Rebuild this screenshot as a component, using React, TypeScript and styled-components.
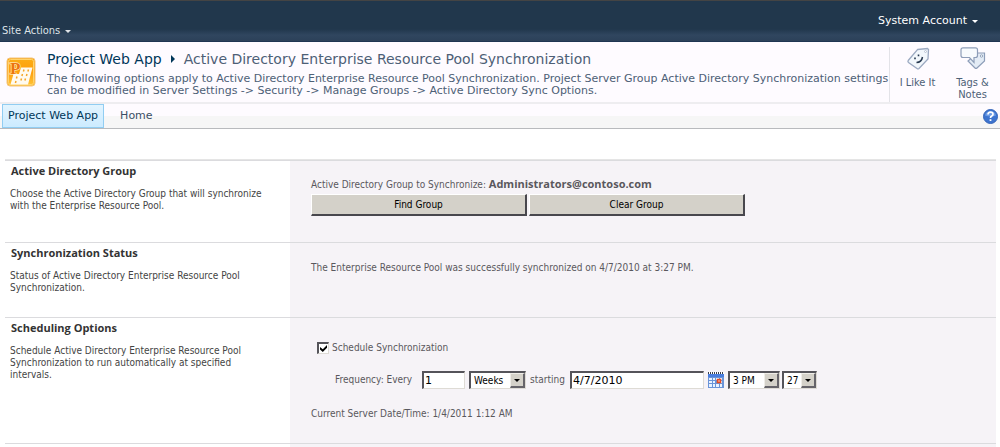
import React from 'react';
import styled, { createGlobalStyle } from 'styled-components';

const wide = `'DejaVu Sans', Verdana, sans-serif`;
const narrow = `'DejaVu Sans Condensed', 'DejaVu Sans', Tahoma, sans-serif`;
const strong = `'Open Sans', Tahoma, sans-serif`;

const GlobalStyle = createGlobalStyle`
  * { box-sizing: border-box; }
  body { margin: 0; background: #fff; font-family: ${narrow}; font-size: 11px; line-height: 12px; color: #444; overflow: hidden; }
  button, input, select { font: inherit; margin: 0; }
  h1, h2, p { margin: 0; font: inherit; }
  b { font-family: ${strong}; font-size: 11px; line-height: 10px; }
`;

const Ribbon = styled.header`
  display: flex;
  justify-content: space-between;
  height: 42px;
  padding: 0 22px 0 2px;
  border-top: 1px solid #444;
  border-bottom: 1px solid #1f3552;
  background: linear-gradient(#21374c 0 70%, #30465f 85%, #2c4159);
`;

const MenuButton = styled.button<{ $wide?: boolean }>`
  display: flex;
  align-items: center;
  gap: 5px;
  align-self: ${(p) => (p.$wide ? 'flex-start' : 'flex-end')};
  margin: ${(p) => (p.$wide ? '12px 0 0' : '0 0 2px')};
  padding: 0;
  border: 0;
  background: none;
  color: ${(p) => (p.$wide ? '#fff' : '#dfe3e8')};
  font-family: ${(p) => (p.$wide ? wide : narrow)};
  line-height: 16px;
`;

const Caret = styled.span`
  border: solid transparent;
  border-width: 3px 3px 0;
  border-top-color: currentColor;
`;

const TitleArea = styled.div`
  display: flex;
  min-height: 62px;
  border-bottom: 2px solid #eeedf0;
  background: #fefbff;
`;

const Logo = styled.svg`
  flex: none;
  width: 30px;
  height: 30px;
  margin: 15px 11px 0 6px;
`;

const TitleText = styled.div`
  flex: 1;
  min-width: 0;
  padding-top: 7px;
  font-family: ${wide};
  color: #4d6076;
`;

const Title = styled.h1`
  display: flex;
  align-items: center;
  gap: 9px;
  font-size: 14px;
  line-height: 20px;
  white-space: nowrap;

  a { color: #003759; text-decoration: none; }
`;

const Crumb = styled.span`
  border: solid transparent;
  border-width: 4px 0 4px 4px;
  border-left-color: #003759;
`;

const Description = styled.p`
  margin-top: 4px;
`;

const Social = styled.div`
  display: flex;
  flex: none;
  width: 111px;
  margin-top: 5px;
  border-left: 1px solid #e3e3e8;
`;

const SocialButton = styled.button`
  display: flex;
  flex: 1;
  flex-direction: column;
  align-items: center;
  gap: 6px;
  padding: 0;
  border: 0;
  background: none;
  color: #4d6076;

  svg { width: 26px; height: 24px; }
`;

const Nav = styled.nav`
  display: flex;
  align-items: center;
  height: 25px;
  padding: 0 2px;
  border-bottom: 1px solid #b8babd;
  background: linear-gradient(#fefbff 0 50%, #f6f6f6 50%);
  font-family: ${wide};
`;

const NavLink = styled.a<{ $active?: boolean }>`
  display: flex;
  align-items: center;
  height: 24px;
  margin-right: 10px;
  padding: 0 5px;
  border: 1px solid ${(p) => (p.$active ? '#91cdf2' : 'transparent')};
  background: ${(p) => (p.$active ? 'linear-gradient(#e2f4ff, #ccebff)' : 'none')};
  color: ${(p) => (p.$active ? '#003759' : '#3b4f65')};
  text-decoration: none;
  white-space: nowrap;
`;

const HelpLink = styled.a`
  display: flex;
  margin-left: auto;

  svg { width: 15px; height: 15px; }
`;

const Settings = styled.main`
  margin: 30px 4px 0 5px;
  border-top: 1px solid #e5e5e5;
  font-size: 10px;
`;

const Section = styled.section<{ $height: number }>`
  display: grid;
  grid-template-columns: 285px 1fr;
  min-height: ${(p) => p.$height}px;
  border-top: 1px solid #dbdbde;
`;

const About = styled.div`
  padding: 4px 22px 0 5px;
`;

const Heading = styled.h2`
  margin: 0 0 11px 1px;
  font-family: ${strong};
  font-size: 11px;
  font-weight: bold;
  color: #333;
`;

const Controls = styled.div<{ $top: number }>`
  padding: ${(p) => p.$top}px 0 0 21px;
  background: #f6f3f7;
  color: #5a585d;
`;

const ButtonRow = styled.div`
  display: flex;
  gap: 2px;
  margin-top: 3px;
`;

const PushButton = styled.button`
  width: 216px;
  height: 22px;
  padding: 0;
  border: solid;
  border-width: 1px 2px 2px 1px;
  border-color: #fff #48474d #48474d #fff;
  background: #d4d1c9;
  color: #000;
`;

const CheckLabel = styled.label`
  display: flex;
  align-items: center;
  gap: 3px;
  margin-left: 6px;
`;

const sunken = `
  border: solid;
  border-width: 2px 1px 1px 2px;
  border-color: #55545a #dedbd5 #dedbd5 #55545a;
  border-radius: 0;
  background: #fff;
  color: #000;
`;

const CheckBox = styled.input`
  appearance: none;
  width: 12px;
  height: 12px;
  ${sunken}

  &:checked::after {
    content: '';
    display: block;
    width: 7px;
    height: 7px;
    margin: 1px;
    background: #000;
    clip-path: polygon(0 28%, 40% 62%, 100% 0, 100% 40%, 40% 100%, 0 66%);
  }
`;

const Frequency = styled.div`
  display: flex;
  align-items: center;
  gap: 4px;
  margin: 17px 0 19px 24px;
  white-space: nowrap;
`;

const FieldLabel = styled.label<{ $width: number }>`
  min-width: ${(p) => p.$width}px;
`;

const TextBox = styled.input<{ $width: number }>`
  width: ${(p) => p.$width}px;
  height: 18px;
  padding: 0 1px;
  ${sunken}
  font-family: ${wide};
  font-size: 11px;
`;

const Picker = styled.span<{ $width: number }>`
  position: relative;
  width: ${(p) => p.$width}px;
  height: 18px;

  select {
    appearance: none;
    width: 100%;
    height: 18px;
    padding: 0 0 0 3px;
    ${sunken}
  }
`;

const Drop = styled.span`
  position: absolute;
  top: 2px;
  right: 1px;
  display: grid;
  place-items: center;
  width: 15px;
  height: 15px;
  border: solid;
  border-width: 1px 2px 2px 1px;
  border-color: #efede8 #66646a #66646a #efede8;
  background: #d4d1c9;
  color: #000;
  pointer-events: none;
`;

const TimeGroup = styled.span`
  display: flex;
  gap: 2px;
`;

const DateButton = styled.button`
  display: flex;
  padding: 0;
  border: 0;
  background: none;

  svg { width: 16px; height: 16px; }
`;

function Select({ label, value, width, options }: { label: string; value: string; width: number; options: string[] }) {
  return (
    <Picker $width={width}>
      <select aria-label={label} defaultValue={value}>
        {options.map((o) => <option key={o}>{o}</option>)}
      </select>
      <Drop><Caret /></Drop>
    </Picker>
  );
}

function ProjectLogo() {
  return (
    <Logo viewBox="0 0 30 30" aria-hidden="true">
      <defs>
        <linearGradient id="orange" x1="0" y1="0" x2="0" y2="1">
          <stop offset="0" stopColor="#fbae17" />
          <stop offset=".5" stopColor="#ff9d0a" />
          <stop offset="1" stopColor="#ffc63a" />
        </linearGradient>
      </defs>
      <rect x="1" y="1" width="28" height="28" rx="3" fill="url(#orange)" stroke="#f3c27d" />
      <rect x="2.500" y="2.500" width="25" height="25" rx="2" fill="none" stroke="#ffd36e" />
      <text x="4" y="16.500" fontFamily="Liberation Serif" fontWeight="bold" fontSize="17" fill="#ec7410" stroke="#ffe3a8" strokeWidth="1.500" paintOrder="stroke">P</text>
      <path d="M15 10.500h11.500L22 27.500H4.500L7.500 17h5.500z" fill="#fffaf0" />
      <path d="M18 12.500l-.6 2M22.500 12.500l-.6 2M16.500 17l-.6 2M21 17l-.6 2M11 19.500l-.6 2M15.500 21.500l-.6 2M10 24l-.6 2M19.500 21.500l-.6 2" stroke="#f5a526" strokeWidth="1.500" />
    </Logo>
  );
}

export default function App() {
  return (
    <>
      <GlobalStyle />
      <Ribbon>
        <MenuButton type="button">Site Actions <Caret /></MenuButton>
        <MenuButton type="button" $wide>System Account <Caret /></MenuButton>
      </Ribbon>

      <TitleArea>
        <ProjectLogo />
        <TitleText>
          <Title>
            <a href="#app">Project Web App</a>
            <Crumb />
            <span>Active Directory Enterprise Resource Pool Synchronization</span>
          </Title>
          <Description>
            The following options apply to Active Directory Enterprise Resource Pool Synchronization. Project Server Group Active Directory Synchronization settings can be modified in Server Settings -&gt; Security -&gt; Manage Groups -&gt; Active Directory Sync Options.
          </Description>
        </TitleText>
        <Social>
          <SocialButton type="button">
            <svg viewBox="0 0 26 24" aria-hidden="true">
              <path d="M12.500 2.500l10-1 1 1-.5 9.500-9 9.500q-1 .8-2 0L3.500 15.500q-1-1-.3-2z" fill="#f2f7fc" stroke="#9ba9c1" strokeWidth="1.300" />
              <circle cx="20.500" cy="4.500" r="1" fill="#fff" stroke="#9caac0" strokeWidth=".6" />
              <path d="M10 10.500v1.800M13.500 7.500v1.800" stroke="#26384f" strokeWidth="1.600" />
              <path d="M11.500 15.500q5 0 6-5.500" fill="none" stroke="#26384f" strokeWidth="1.500" />
            </svg>
            <span>I Like It</span>
          </SocialButton>
          <SocialButton type="button">
            <svg viewBox="0 0 26 24" aria-hidden="true">
              <path d="M17 6l7.500 0v8l-7.500 7q-1 1-2 0L8 14z" fill="#e3ebf5" stroke="#8d9db8" strokeWidth="1.200" />
              <circle cx="21.500" cy="9" r="1.200" fill="#fff" stroke="#7f90ad" strokeWidth=".8" />
              <path d="M3 .8h12.500q2 0 2 2v5.700q0 2-2 2H14v5l-4.500-5H3q-2 0-2-2V2.800q0-2 2-2z" fill="#f7fafd" stroke="#8d9db8" strokeWidth="1.200" />
            </svg>
            <span>Tags &amp;<br />Notes</span>
          </SocialButton>
        </Social>
      </TitleArea>

      <Nav>
        <NavLink href="#app" $active>Project Web App</NavLink>
        <NavLink href="#home">Home</NavLink>
        <HelpLink href="#help" aria-label="Help">
          <svg viewBox="0 0 15 15" aria-hidden="true">
            <circle cx="7.500" cy="7.500" r="7" fill="#3d74cf" stroke="#3565b8" />
            <path d="M2 6.500a5.700 5.700 0 0 1 11 0q-5 2-11 0z" fill="#6f9de6" />
            <path d="M5 5.500q0-2.300 2.500-2.300T10 5.300q0 1.200-1.300 1.800-1.200.6-1.200 2" fill="none" stroke="#fff" strokeWidth="1.700" />
            <rect x="6.600" y="10.200" width="1.800" height="1.800" fill="#fff" />
          </svg>
        </HelpLink>
      </Nav>

      <Settings>
        <Section $height={82}>
          <About>
            <Heading>Active Directory Group</Heading>
            <p>Choose the Active Directory Group that will synchronize with the Enterprise Resource Pool.</p>
          </About>
          <Controls $top={18}>
            <p>Active Directory Group to Synchronize: <b>Administrators@contoso.com</b></p>
            <ButtonRow>
              <PushButton type="button">Find Group</PushButton>
              <PushButton type="button">Clear Group</PushButton>
            </ButtonRow>
          </Controls>
        </Section>

        <Section $height={75}>
          <About>
            <Heading>Synchronization Status</Heading>
            <p>Status of Active Directory Enterprise Resource Pool Synchronization.</p>
          </About>
          <Controls $top={19}>
            <p>The Enterprise Resource Pool was successfully synchronized on 4/7/2010 at 3:27 PM.</p>
          </Controls>
        </Section>

        <Section $height={126}>
          <About>
            <Heading>Scheduling Options</Heading>
            <p>Schedule Active Directory Enterprise Resource Pool Synchronization to run automatically at specified intervals.</p>
          </About>
          <Controls $top={24}>
            <CheckLabel><CheckBox type="checkbox" defaultChecked />Schedule Synchronization</CheckLabel>
            <Frequency>
              <FieldLabel $width={83} htmlFor="every">Frequency: Every</FieldLabel>
              <TextBox id="every" $width={43} defaultValue="1" />
              <Select label="Unit" width={57} value="Weeks" options={['Days', 'Weeks', 'Months']} />
              <FieldLabel $width={36} htmlFor="start">starting</FieldLabel>
              <TextBox id="start" $width={134} defaultValue="4/7/2010" />
              <DateButton type="button" aria-label="Pick a date">
                <svg viewBox="0 0 16 16" aria-hidden="true">
                  <rect x="0" y="2" width="16" height="14" fill="#6a94d8" />
                  <path d="M0 1h16" stroke="#fff" strokeWidth="2" />
                  <path d="M0 1h16" stroke="#3c3f4a" strokeWidth="2" strokeDasharray="1 1" />
                  <path d="M0 3.500h16" stroke="#4a7ede" strokeWidth="3" />
                  <path d="M1 6h3v2H1zM5 6h2v2H5zM8 6h3v2H8zM12 6h2v2h-2zM1 9h3v2H1zM5 9h2v2H5zM12 9h2v2h-2zM1 12h3v3H1zM5 12h2v3H5zM8 12h3v3H8zM12 12h2v3h-2z" fill="#eaf3ff" />
                  <path d="M9.500 7.500h3v3h-3z" fill="#f6b8a5" stroke="#e84c22" strokeWidth="1.500" />
                </svg>
              </DateButton>
              <TimeGroup>
                <Select label="Hour" width={52} value="3 PM" options={['2 PM', '3 PM', '4 PM']} />
                <Select label="Minute" width={35} value="27" options={['26', '27', '28']} />
              </TimeGroup>
            </Frequency>
            <p>Current Server Date/Time: 1/4/2011 1:12 AM</p>
          </Controls>
        </Section>

        <Section $height={20}>
          <About />
          <Controls $top={0} />
        </Section>
      </Settings>
    </>
  );
}
